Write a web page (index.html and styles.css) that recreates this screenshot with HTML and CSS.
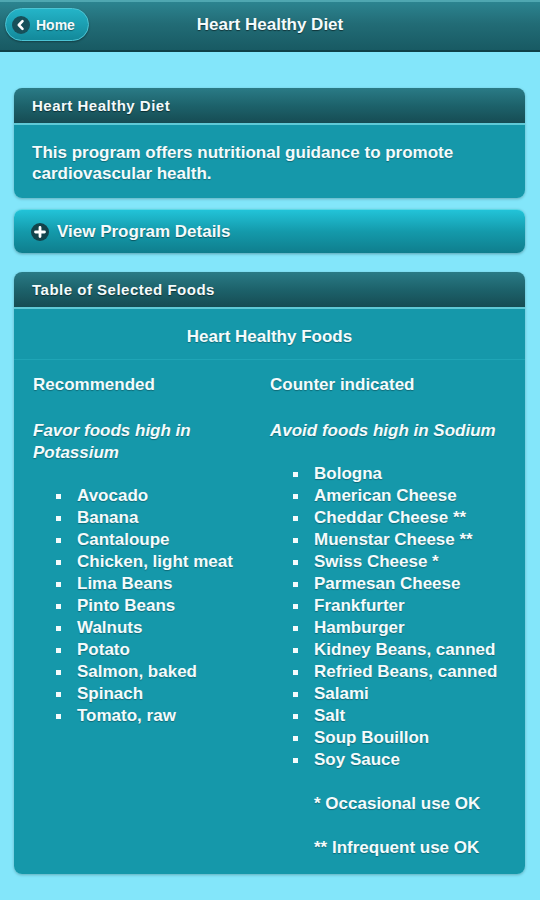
FILE: index.html
```html
<!DOCTYPE html>
<html>
<head>
<meta charset="utf-8">
<link rel="stylesheet" href="styles.css">
</head>
<body>
<header class="topbar">
  <a class="home-btn" href="#">
    <span class="home-icon"><svg width="16" height="16" viewBox="0 0 16 16"><path d="M9.5 4.2 L5.8 8 L9.5 11.8" fill="none" stroke="#fff" stroke-width="2.6" stroke-linecap="round" stroke-linejoin="round"/></svg></span>
    <span class="home-label">Home</span>
  </a>
  <h1 class="topbar-title">Heart Healthy Diet</h1>
</header>

<main class="content">
  <section class="panel">
    <div class="panel-head">Heart Healthy Diet</div>
    <div class="panel-body intro">This program offers nutritional guidance to promote cardiovascular health.</div>
  </section>

  <div class="collapsible">
    <span class="plus-icon"><svg width="18" height="18" viewBox="0 0 18 18"><path d="M9 4.5 V13.5 M4.5 9 H13.5" stroke="#fff" stroke-width="2.8" stroke-linecap="round"/></svg></span>
    <span>View Program Details</span>
  </div>

  <section class="panel">
    <div class="panel-head">Table of Selected Foods</div>
    <div class="panel-body table-body">
      <div class="table-title">Heart Healthy Foods</div>
      <div class="cols">
        <div class="col">
          <p class="col-head">Recommended</p>
          <p class="col-sub">Favor foods high in Potassium</p>
          <ul class="foods">
            <li>Avocado</li>
            <li>Banana</li>
            <li>Cantaloupe</li>
            <li>Chicken, light meat</li>
            <li>Lima Beans</li>
            <li>Pinto Beans</li>
            <li>Walnuts</li>
            <li>Potato</li>
            <li>Salmon, baked</li>
            <li>Spinach</li>
            <li>Tomato, raw</li>
          </ul>
        </div>
        <div class="col">
          <p class="col-head">Counter indicated</p>
          <p class="col-sub">Avoid foods high in Sodium</p>
          <ul class="foods">
            <li>Bologna</li>
            <li>American Cheese</li>
            <li>Cheddar Cheese **</li>
            <li>Muenstar Cheese **</li>
            <li>Swiss Cheese *</li>
            <li>Parmesan Cheese</li>
            <li>Frankfurter</li>
            <li>Hamburger</li>
            <li>Kidney Beans, canned</li>
            <li>Refried Beans, canned</li>
            <li>Salami</li>
            <li>Salt</li>
            <li>Soup Bouillon</li>
            <li>Soy Sauce</li>
          </ul>
          <p class="note">* Occasional use OK</p>
          <p class="note">** Infrequent use OK</p>
        </div>
      </div>
    </div>
  </section>
</main>
</body>
</html>
```

FILE: styles.css
```css
* { box-sizing: border-box; }

html, body {
  margin: 0;
  padding: 0;
}

body {
  background: #83e6fa;
  font-family: "Liberation Sans", Arial, sans-serif;
  font-weight: bold;
  color: #f4fbfc;
  width: 540px;
  min-height: 900px;
}

.topbar {
  height: 52px;
  background: linear-gradient(#2c8490 0%, #226c76 45%, #185a63 100%);
  border-top: 2px solid #4fa7b1;
  border-bottom: 2px solid #0f4148;
  display: flex;
  align-items: center;
  justify-content: center;
  position: relative;
}

.home-btn {
  position: absolute;
  left: 5px;
  top: 6px;
  width: 84px;
  height: 33px;
  border-radius: 17px;
  background: linear-gradient(#24b4c8, #13899a);
  border: 1px solid #4cc4d4;
  box-shadow: 0 1px 2px rgba(0,0,0,0.35);
  display: flex;
  align-items: center;
  padding-left: 6px;
  gap: 6px;
  text-decoration: none;
  color: #f4fbfc;
}

.home-icon {
  width: 18px;
  height: 18px;
  border-radius: 50%;
  background: #17505a;
  display: flex;
  align-items: center;
  justify-content: center;
}

.home-label {
  font-size: 14px;
  text-shadow: 0 1px 1px rgba(0,0,0,0.4);
}

.topbar-title {
  margin: 0 0 2px;
  font-size: 17px;
  font-weight: bold;
  text-shadow: 0 1px 1px rgba(0,0,0,0.5);
}

.content {
  padding: 36px 15px 20px 14px;
}

.panel {
  border-radius: 8px;
  overflow: hidden;
  box-shadow: 0 1px 3px rgba(0,0,0,0.25);
  margin-bottom: 11px;
}

.panel-head {
  height: 37px;
  background: linear-gradient(#2a7b86 0%, #1d626b 50%, #164c53 100%);
  border-bottom: 2px solid #5fc9d6;
  padding: 0 18px;
  display: flex;
  align-items: center;
  font-size: 15px;
  letter-spacing: 0.5px;
  text-shadow: 0 1px 1px rgba(0,0,0,0.5);
}

.panel-body {
  background: #1598aa;
  text-shadow: 0 1px 1px rgba(0,0,0,0.3);
}

.intro {
  font-size: 17px;
  line-height: 21px;
  padding: 17px 18px 14px 18px;
}

.collapsible {
  height: 44px;
  border-radius: 8px;
  background: linear-gradient(#22c3d8 0%, #149aab 50%, #0f7e8d 100%);
  border-top: 1px solid #5ad8e6;
  box-shadow: 0 1px 3px rgba(0,0,0,0.3);
  display: flex;
  align-items: center;
  padding-left: 17px;
  gap: 8px;
  font-size: 17px;
  text-shadow: 0 1px 1px rgba(0,0,0,0.4);
  margin-bottom: 19px;
}

.plus-icon {
  width: 18px;
  height: 18px;
  border-radius: 50%;
  background: #12434b;
  display: flex;
  align-items: center;
  justify-content: center;
}

.table-body {
  font-size: 17px;
  line-height: 22px;
  padding-bottom: 15px;
}

.table-title {
  text-align: center;
  padding: 17px 0 11px;
  border-bottom: 1px solid #1fa5b6;
}

.cols {
  display: grid;
  grid-template-columns: 237px 1fr;
  padding: 14px 14px 0 19px;
}

.col p {
  margin: 0;
}

.col-head {
  margin-bottom: 24px !important;
}

.col-sub {
  font-style: italic;
  padding-right: 10px;
}

.foods {
  list-style: none;
  margin: 21px 0 0 0;
  padding: 0 0 0 44px;
}

.foods li {
  position: relative;
  white-space: nowrap;
}

.foods li::before {
  content: "";
  position: absolute;
  left: -21px;
  top: 9px;
  width: 5px;
  height: 5px;
  background: #f4fbfc;
}

.note {
  padding-left: 44px;
  margin-top: 22px !important;
}
```
